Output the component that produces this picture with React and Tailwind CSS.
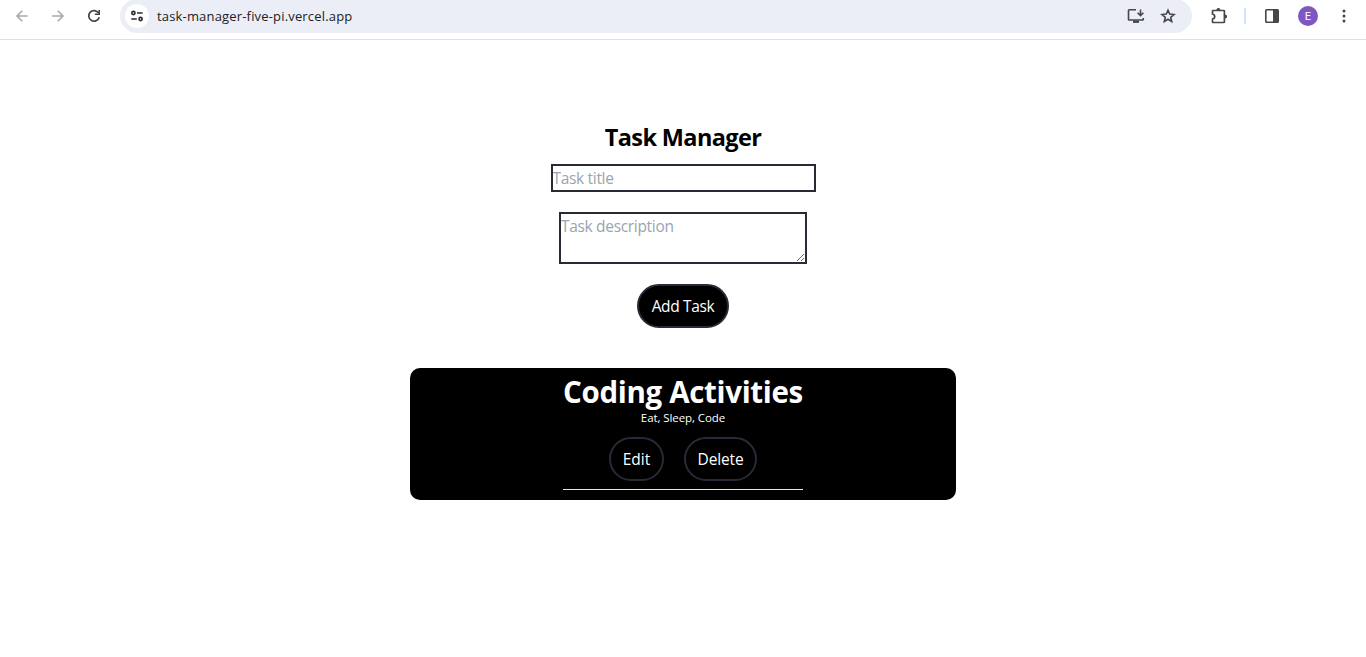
import React from "react";

const ARROW = "M3 8h10.5M8.2 2.8L3 8l5.2 5.2";

function Toolbar() {
  return (
    <header className="flex h-10 items-start border-b border-[#dfe0e1] bg-white text-[#474747]">
      <nav className="flex h-8 w-[120px] shrink-0 items-center gap-5 pl-[14px]">
        <svg width="16" height="16" viewBox="0 0 16 16" fill="none" stroke="#a9a9a9" strokeWidth="1.6">
          <path d={ARROW} />
        </svg>
        <svg width="16" height="16" viewBox="0 0 16 16" fill="none" stroke="#a9a9a9" strokeWidth="1.6">
          <path d="M2 8h10.8M7.8 2.8L13 8l-5.2 5.2" />
        </svg>
        <svg width="16" height="16" viewBox="0 0 16 16" fill="none" stroke="#444444" strokeWidth="1.7">
          <path d="M12.6 5.1A5.3 5.3 0 1 0 13.2 9.2" />
          <path d="M13.2 1.9v4.3H8.9" strokeWidth="1.6" />
        </svg>
      </nav>
      <div className="-mt-px flex h-[34px] w-[1072px] shrink-0 items-center rounded-full bg-[#ebeef7] pl-[5px] pr-4">
        <span className="flex size-6 items-center justify-center rounded-full bg-white">
          <svg width="14" height="12" viewBox="0 0 14 12" fill="none" stroke="#2c2c2c" strokeWidth="1.6">
            <circle cx="3.4" cy="3" r="1.6" />
            <path d="M7 3h5.6M1.2 9h5.6" />
            <circle cx="10.6" cy="9" r="1.6" />
          </svg>
        </span>
        <span className="ml-2 w-[200px] whitespace-nowrap font-['Open_Sans',sans-serif] text-[13px] leading-5 tracking-[0.17px] text-[#202124]">
          task-manager-five-pi.vercel.app
        </span>
        <span className="ml-auto flex items-center gap-[15px]">
          <svg width="18" height="16" viewBox="0 0 18 16" fill="none" stroke="#474747" strokeWidth="1.6">
            <path d="M9 1.8H2.3q-.8 0-.8.8v8.6q0 .8.8.8h13.2q.8 0 .8-.8V10" />
            <path d="M6 13.7h6" strokeWidth="2.4" />
            <path d="M13.5 1.4v6M10.6 4.7l2.9 2.9 2.9-2.9" />
          </svg>
          <svg width="16" height="16" viewBox="0 0 16 16" fill="none" stroke="#474747" strokeWidth="1.6">
            <path d="M8 2.2l1.7 3.9 4.3.4-3.3 2.8 1 4.2L8 11.3l-3.7 2.2 1-4.2L2 6.5l4.3-.4z" />
          </svg>
        </span>
      </div>
      <div className="flex h-8 flex-1 items-center pl-[18px]">
        <svg width="18" height="18" viewBox="0 0 18 18" fill="none" stroke="#474747" strokeWidth="1.7">
          <path d="M3 3.5h10.9q.5 0 .5.5v11q0 .5-.5.5H3q-.5 0-.5-.5v-2.9c3-.8 3-4.3 0-5.1V4q0-.5.5-.5z" />
          <path d="M6.4 3a2 2 0 0 1 4 0zM15 7.4a2.1 2.1 0 0 1 0 4.2z" fill="#474747" stroke="none" />
        </svg>
        <span className="ml-4 h-4 w-0.5 bg-[#d3e3fd]" />
        <svg className="ml-[18px]" width="16" height="16" viewBox="0 0 16 16">
          <rect x="1.8" y="1.8" width="12.4" height="12.4" rx="0.8" fill="none" stroke="#474747" strokeWidth="1.6" />
          <path d="M9 1.5h5.2v13H9z" fill="#474747" />
        </svg>
        <span className="ml-[18px] flex size-5 items-center justify-center rounded-full bg-[#7e57c2] font-['Roboto',sans-serif] text-[11px] leading-none text-white">
          E
        </span>
        <svg className="ml-[18px]" width="16" height="16" viewBox="0 0 16 16" fill="#474747">
          <circle cx="8" cy="3" r="1.5" />
          <circle cx="8" cy="8" r="1.5" />
          <circle cx="8" cy="13" r="1.5" />
        </svg>
      </div>
    </header>
  );
}

function PillButton({ className, children }) {
  return (
    <button
      className={`flex h-11 items-center justify-center whitespace-nowrap rounded-[24px] border-2 border-[#282a35] bg-black text-[15.5px] leading-6 text-white ${className}`}
    >
      {children}
    </button>
  );
}

export default function App() {
  return (
    <div className="h-[657px] overflow-hidden bg-white font-['Open_Sans',sans-serif]">
      <Toolbar />
      <main className="flex flex-col items-center pt-[79px]">
        <h1 className="whitespace-nowrap text-[23.5px] font-bold leading-9 tracking-[-0.63px] text-black">Task Manager</h1>
        <input
          className="mt-[9px] block h-7 w-[265px] border-2 border-[#282a35] text-[15.5px] leading-6 tracking-[-0.32px] outline-none placeholder:text-[#9ca3af]"
          placeholder="Task title"
        />
        <textarea
          className="mt-5 block h-[52px] w-[248px] border-2 border-[#282a35] text-[15.5px] leading-6 tracking-[-0.32px] outline-none placeholder:text-[#9ca3af]"
          placeholder="Task description"
        />
        <PillButton className="mt-5 w-[92px] tracking-[-0.35px]">Add Task</PillButton>
        <section className="mt-10 flex h-[132px] w-[546px] justify-center rounded-[10px] bg-black pt-[7px] text-white">
          <div className="flex h-[115px] w-60 flex-col items-center border-b border-[#e5e7eb]">
            <h2 className="whitespace-nowrap text-[29.5px] font-bold leading-[34px] tracking-[-0.33px]">Coding Activities</h2>
            <p className="mt-px whitespace-nowrap text-[11.5px] leading-4 tracking-[-0.08px]">Eat, Sleep, Code</p>
            <div className="mt-[11px] flex gap-5">
              <PillButton className="w-[55px]">Edit</PillButton>
              <PillButton className="w-[73px] tracking-[-0.15px]">Delete</PillButton>
            </div>
          </div>
        </section>
      </main>
    </div>
  );
}
